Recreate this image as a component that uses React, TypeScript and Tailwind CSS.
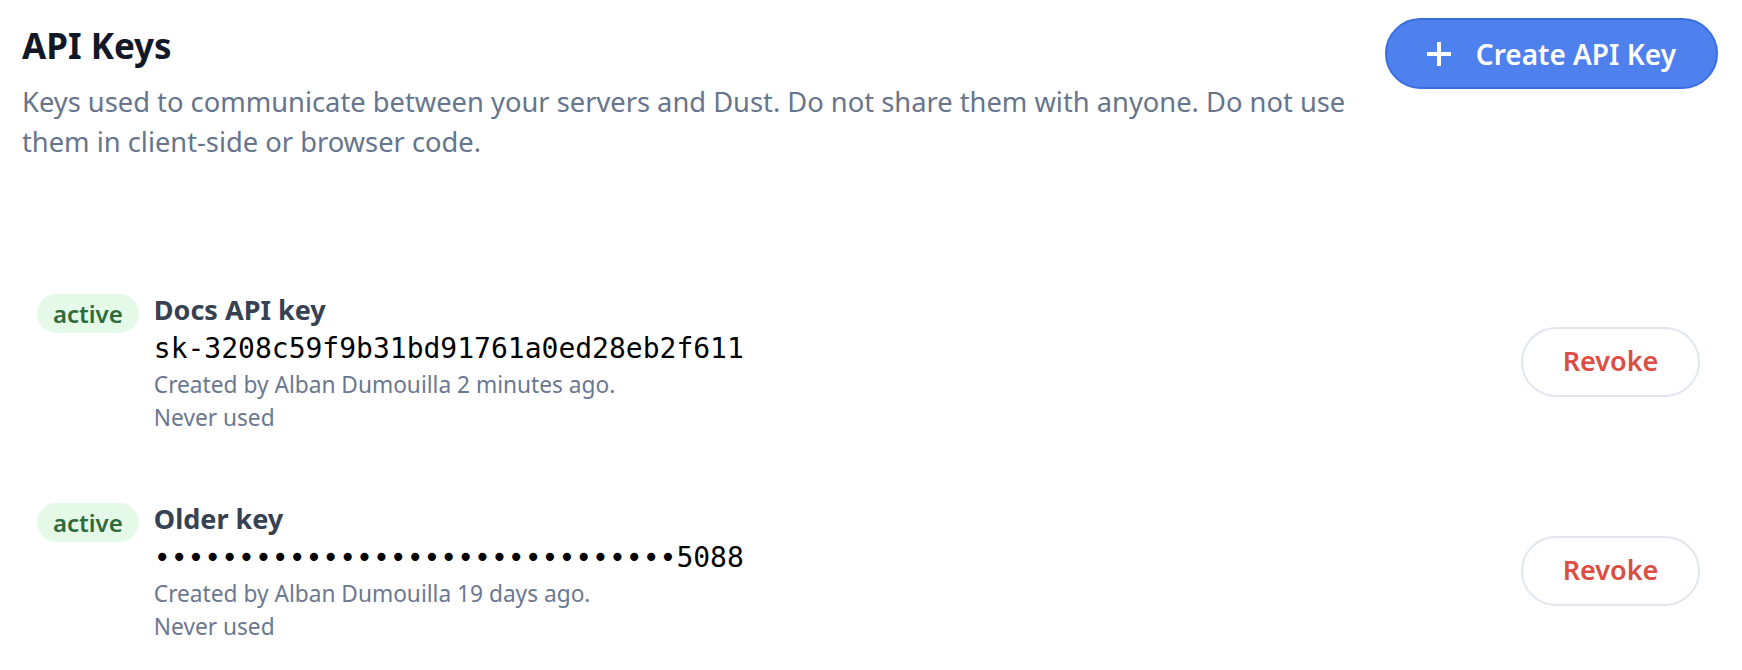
import { Fragment } from 'react';

interface ApiKey {
  name: string;
  secret: string;
  createdBy: string;
  createdAgo: string;
  lastUsed: string;
}

const keys: ApiKey[] = [
  {
    name: 'Docs API key',
    secret: 'sk-3208c59f9b31bd91761a0ed28eb2f611',
    createdBy: 'Alban Dumouilla',
    createdAgo: '2 minutes ago',
    lastUsed: 'Never used',
  },
  {
    name: 'Older key',
    secret: '\u2022'.repeat(31) + '5088',
    createdBy: 'Alban Dumouilla',
    createdAgo: '19 days ago',
    lastUsed: 'Never used',
  },
];

function PlusIcon() {
  return (
    <svg width="24" height="24" viewBox="0 0 24 24" className="shrink-0">
      <path d="M12 1.5v21M1.5 12h21" stroke="#fff" strokeWidth="4" strokeLinecap="square" />
    </svg>
  );
}

export default function App() {
  return (
    <div
      className="min-h-screen bg-white pt-[18px] pl-[22px] pr-[24px]"
      style={{ fontFamily: '"Noto Sans", "Open Sans", sans-serif' }}
    >
      {/* Header */}
      <div className="flex items-start gap-6">
        <div className="flex-1">
          <h1 className="mt-2 text-[35px] leading-[40px] font-bold text-[#111827]">API Keys</h1>
          <p className="mt-4 text-[27.3px] leading-[40px] text-[#66758c]">
            Keys used to communicate between your servers and Dust. Do not share them with anyone. Do not
            use them in client-side or browser code.
          </p>
        </div>
        <button className="flex h-[71px] items-center gap-[25px] rounded-full border-2 border-[#3a6de0] bg-[#4f81ee] pl-[40px] pr-[40px] text-[28px] font-semibold text-white">
          <PlusIcon />
          <span>Create API Key</span>
        </button>
      </div>

      {/* Keys list */}
      <div className="mt-[95px] flex flex-col">
        {keys.map((k) => (
          <Fragment key={k.name}>
            <div className="flex items-center py-[32px] pl-[15px] pr-[18px]">
              <div className="flex flex-1 items-start gap-[15px]">
                <span className="mt-[5px] flex h-[39px] items-center rounded-full bg-[#e4f9e7] px-[16px] text-[24px] font-semibold text-[#2e6b3b]">
                  active
                </span>
                <div className="flex flex-col">
                  <span className="text-[27px] leading-[41px] font-bold text-[#364152]">{k.name}</span>
                  <span
                    className="text-[28px] leading-[38px] text-black"
                    style={{ fontFamily: '"DejaVu Sans Mono", "Liberation Mono", monospace' }}
                  >
                    {k.secret}
                  </span>
                  <span className="text-[22.7px] leading-[33px] text-[#6b7890]">
                    Created by {k.createdBy} {k.createdAgo}.
                  </span>
                  <span className="text-[22.7px] leading-[33px] text-[#6b7890]">{k.lastUsed}</span>
                </div>
              </div>
              <button className="flex h-[70px] w-[179px] items-center justify-center rounded-full border-2 border-[#e1e6ef] bg-white text-[27px] font-semibold text-[#dc4e42]">
                Revoke
              </button>
            </div>
          </Fragment>
        ))}
      </div>
    </div>
  );
}
